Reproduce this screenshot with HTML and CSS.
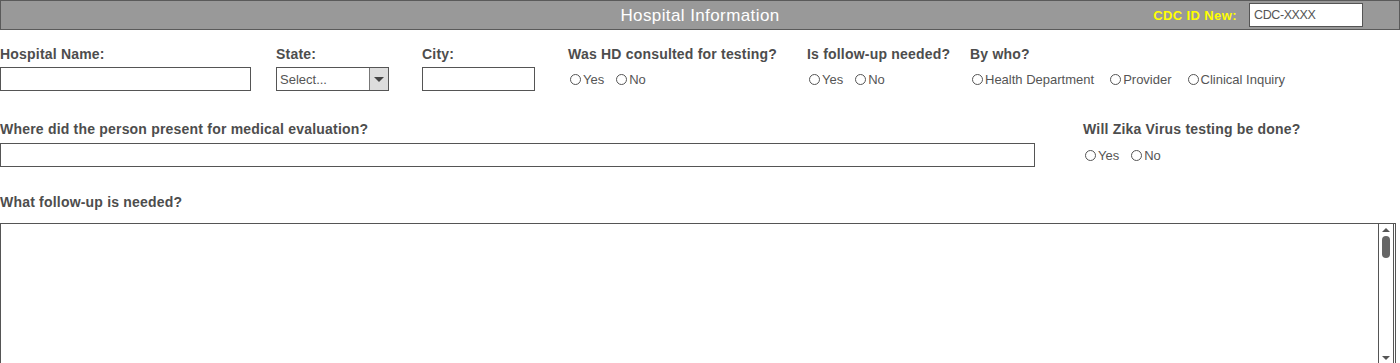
FILE: index.html
```html
<!DOCTYPE html>
<html lang="en">
<head>
    <meta charset="UTF-8">
    <title>Hospital Information</title>
    <link rel="stylesheet" href="styles.css">
</head>
<body>
    <!-- Cabeçalho -->
    <div class="header">
        <div></div>
        <div class="header-title">Hospital Information</div>
        <div class="header-id">
            <span class="id-label">CDC ID New:</span>
            <div class="id-box">CDC-XXXX</div>
        </div>
    </div>

    <!-- Linha 1 -->
    <div class="row row-one">
        <div class="field col-name">
            <div class="label">Hospital Name:</div>
            <div class="input w-name"></div>
        </div>
        <div class="field col-state">
            <div class="label">State:</div>
            <div class="select">
                <span class="select-text">Select...</span>
                <span class="select-btn"><span class="caret"></span></span>
            </div>
        </div>
        <div class="field col-city">
            <div class="label">City:</div>
            <div class="input w-city"></div>
        </div>
        <div class="field col-hd">
            <div class="label">Was HD consulted for testing?</div>
            <div class="radios">
                <span class="radio"><i></i>Yes</span>
                <span class="radio"><i></i>No</span>
            </div>
        </div>
        <div class="field col-follow">
            <div class="label">Is follow-up needed?</div>
            <div class="radios">
                <span class="radio"><i></i>Yes</span>
                <span class="radio"><i></i>No</span>
            </div>
        </div>
        <div class="field">
            <div class="label">By who?</div>
            <div class="radios wide">
                <span class="radio"><i></i>Health Department</span>
                <span class="radio"><i></i>Provider</span>
                <span class="radio"><i></i>Clinical Inquiry</span>
            </div>
        </div>
    </div>

    <!-- Linha 2 -->
    <div class="row row-two">
        <div class="field col-where">
            <div class="label">Where did the person present for medical evaluation?</div>
            <div class="input w-where"></div>
        </div>
        <div class="field">
            <div class="label">Will Zika Virus testing be done?</div>
            <div class="radios">
                <span class="radio"><i></i>Yes</span>
                <span class="radio"><i></i>No</span>
            </div>
        </div>
    </div>

    <!-- Linha 3 -->
    <div class="row-three">
        <div class="label">What follow-up is needed?</div>
        <div class="textarea">
            <div class="scrollbar">
                <span class="arrow-up"></span>
                <span class="thumb"></span>
                <span class="arrow-down"></span>
            </div>
        </div>
    </div>
</body>
</html>
```

FILE: styles.css
```css
* {
    margin: 0;
    padding: 0;
    box-sizing: border-box;
}

body {
    font-family: 'Liberation Sans', Arial, sans-serif;
    background-color: #ffffff;
    color: #4d4d4d;
    width: 1400px;
    height: 363px;
    overflow: hidden;
}

/* Cabeçalho */
.header {
    height: 30px;
    background-color: #999999;
    border: 1px solid #5a5a5a;
    display: grid;
    grid-template-columns: 1fr auto 1fr;
    align-items: center;
}

.header-title {
    color: #ffffff;
    font-size: 17px;
    letter-spacing: 0.4px;
    padding-top: 2px;
}

.header-id {
    display: flex;
    justify-content: flex-end;
    align-items: center;
    padding-right: 36px;
}

.id-label {
    color: #ffff00;
    font-weight: bold;
    font-size: 13px;
    letter-spacing: 0.4px;
    margin-right: 12px;
}

.id-box {
    width: 114px;
    height: 24px;
    background: #ffffff;
    border: 1px solid #555555;
    font-size: 12.5px;
    letter-spacing: -0.4px;
    color: #555555;
    padding: 4px 0 0 4px;
}

/* Linhas */
.row {
    display: flex;
}

.row-one {
    padding-top: 17px;
}

.row-one .label {
    margin-bottom: 5px;
}

.row-two {
    padding-top: 31px;
}

.row-three {
    padding-top: 28px;
}

.label {
    font-size: 14px;
    letter-spacing: 0.2px;
    font-weight: bold;
    line-height: 15px;
    height: 15px;
    margin-bottom: 6px;
    white-space: nowrap;
}

.row-three .label {
    margin-bottom: 13px;
}

.col-name { width: 276px; }
.col-state { width: 146px; }
.col-city { width: 146px; }
.col-hd { width: 239px; }
.col-follow { width: 163px; }
.col-where { width: 1083px; }

.input {
    height: 24px;
    border: 1px solid #555555;
    background: #ffffff;
}

.w-name { width: 251px; }
.w-city { width: 113px; }
.w-where { width: 1035px; }

.select {
    width: 113px;
    height: 24px;
    border: 1px solid #555555;
    display: flex;
}

.select-text {
    flex: 1;
    font-size: 13px;
    color: #555555;
    padding: 4px 0 0 3px;
}

.select-btn {
    width: 19px;
    background: #dddddd;
    border-left: 1px solid #777777;
    display: flex;
    justify-content: center;
    align-items: center;
}

.caret {
    width: 0;
    height: 0;
    border-left: 5px solid transparent;
    border-right: 5px solid transparent;
    border-top: 5px solid #444444;
}

/* Botões de rádio */
.radios {
    height: 24px;
    display: flex;
    align-items: center;
    gap: 12px;
    padding-left: 2px;
}

.radios.wide {
    gap: 16px;
}

.radio {
    display: flex;
    align-items: center;
    font-size: 13px;
    color: #555555;
}

.radio i {
    width: 11px;
    height: 11px;
    border: 1px solid #555555;
    border-radius: 50%;
    margin-right: 2px;
}

/* Área de texto */
.textarea {
    width: 1396px;
    height: 150px;
    border: 1px solid #555555;
    display: flex;
    justify-content: flex-end;
}

.scrollbar {
    width: 16px;
    margin-right: 1px;
    border-left: 1px solid #555555;
    border-right: 1px solid #555555;
    position: relative;
}

.arrow-up,
.arrow-down {
    position: absolute;
    left: 3px;
    width: 0;
    height: 0;
    border-left: 4px solid transparent;
    border-right: 4px solid transparent;
}

.arrow-up {
    top: 4px;
    border-bottom: 4px solid #555555;
}

.arrow-down {
    top: 132px;
    border-top: 4px solid #555555;
}

.thumb {
    position: absolute;
    left: 3px;
    top: 12px;
    width: 8px;
    height: 22px;
    background: #666666;
    border-radius: 4px;
}
```
